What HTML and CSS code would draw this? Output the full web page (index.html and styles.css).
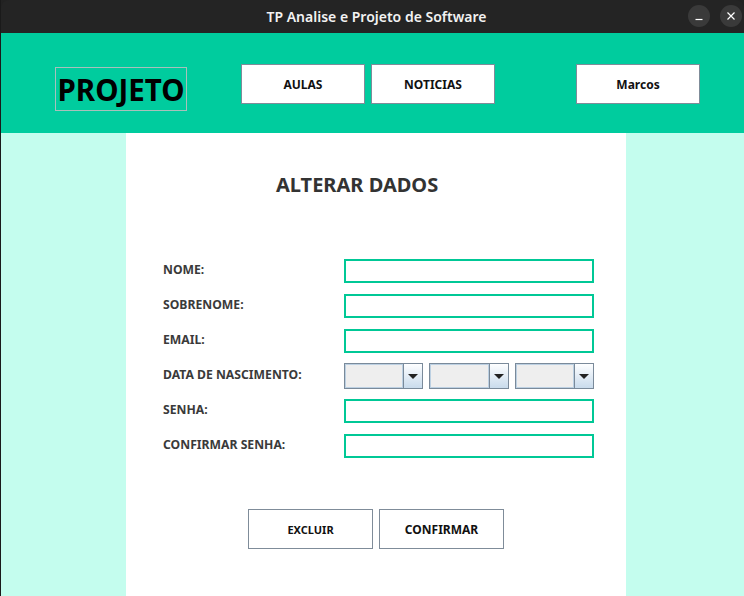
FILE: index.html
```html
<!DOCTYPE html>
<html>
<head>
<meta charset="utf-8">
<link rel="stylesheet" href="styles.css">
</head>
<body>
<div class="window">
  <div class="titlebar">
    <span class="title">TP Analise e Projeto de Software</span>
    <div class="wbtns">
      <span class="wbtn"><svg width="22" height="22" viewBox="0 0 22 22"><path d="M7.5 14.5h7" stroke="#fff" stroke-width="1.2"/></svg></span>
      <span class="wbtn"><svg width="22" height="22" viewBox="0 0 22 22"><path d="M7.5 7.5l7 7M14.5 7.5l-7 7" stroke="#fff" stroke-width="1.2"/></svg></span>
    </div>
  </div>
  <div class="header">
    <div class="logo">PROJETO</div>
    <div class="nav">
      <button class="navbtn">AULAS</button>
      <button class="navbtn">NOTICIAS</button>
    </div>
    <button class="navbtn user">Marcos</button>
  </div>
  <div class="content">
    <div class="side left"></div>
    <div class="panel">
      <h1 class="heading">ALTERAR DADOS</h1>
      <div class="form">
        <div class="row"><label>NOME:</label><div class="field"></div></div>
        <div class="row"><label>SOBRENOME:</label><div class="field"></div></div>
        <div class="row"><label>EMAIL:</label><div class="field"></div></div>
        <div class="row"><label>DATA DE NASCIMENTO:</label>
          <div class="combos">
            <div class="combo"><div class="cval"></div><div class="carrow"><svg width="12" height="7" viewBox="0 0 12 7"><path d="M1 1h10L6 6z" fill="#222"/></svg></div></div>
            <div class="combo"><div class="cval"></div><div class="carrow"><svg width="12" height="7" viewBox="0 0 12 7"><path d="M1 1h10L6 6z" fill="#222"/></svg></div></div>
            <div class="combo"><div class="cval"></div><div class="carrow"><svg width="12" height="7" viewBox="0 0 12 7"><path d="M1 1h10L6 6z" fill="#222"/></svg></div></div>
          </div>
        </div>
        <div class="row"><label>SENHA:</label><div class="field"></div></div>
        <div class="row"><label>CONFIRMAR SENHA:</label><div class="field"></div></div>
      </div>
      <div class="actions">
        <button class="abtn">EXCLUIR</button>
        <button class="abtn confirm">CONFIRMAR</button>
      </div>
    </div>
    <div class="side right"></div>
  </div>
</div>
</body>
</html>
```
FILE: styles.css
```css
* { box-sizing: border-box; }
html, body { margin: 0; padding: 0; }
body {
  width: 744px;
  height: 596px;
  overflow: hidden;
  font-family: "Noto Sans", "Open Sans", sans-serif;
  background: #222;
}
.window {
  width: 744px;
  height: 596px;
  display: flex;
  flex-direction: column;
  border-left: 1px solid #1a1a1a;
}
.titlebar {
  height: 33px;
  background: #242424;
  display: flex;
  align-items: center;
  justify-content: center;
  position: relative;
  border-radius: 8px 8px 0 0;
}
.title {
  color: #f2f2f2;
  font-size: 14px;
  font-weight: 600;
  margin-left: 8px;
}
.wbtns {
  position: absolute;
  right: 2px;
  top: 5px;
  display: flex;
  gap: 10px;
}
.wbtn {
  width: 22px;
  height: 22px;
  border-radius: 50%;
  background: #3a3a3a;
  display: block;
}
.wbtn svg { display: block; }
.header {
  height: 100px;
  background: #00cc9e;
  display: flex;
  align-items: flex-start;
  padding-left: 54px;
}
.logo {
  margin-top: 34px;
  width: 132px;
  height: 44px;
  border: 1px solid #a9c0bb;
  font-size: 29.5px;
  font-weight: 700;
  color: #000;
  display: flex;
  align-items: center;
  justify-content: center;
}
.nav {
  display: flex;
  gap: 6px;
  margin-left: 54px;
  margin-top: 31px;
}
.navbtn {
  width: 124px;
  height: 40px;
  background: #fff;
  border: 1px solid #7f8c99;
  font-family: "Noto Sans", sans-serif;
  font-size: 12px;
  font-weight: 700;
  color: #111;
  padding: 0;
}
.user {
  margin-left: 81px;
  margin-top: 31px;
}
.content {
  flex: 1;
  display: flex;
}
.side { background: #c4fdee; }
.side.left { width: 125px; }
.side.right { width: 118px; }
.panel {
  width: 500px;
  background: #fff;
  padding-top: 39px;
}
.heading {
  margin: 0;
  padding-left: 150px;
  font-size: 20px;
  line-height: 26px;
  font-weight: 700;
  color: #333;
}
.form {
  margin-top: 61px;
  padding-left: 37px;
  display: flex;
  flex-direction: column;
  gap: 11px;
}
.row {
  display: flex;
  align-items: center;
  height: 24px;
}
.row label {
  width: 181px;
  font-size: 12.2px;
  font-weight: 700;
  color: #3a3a3a;
  margin-bottom: 4px;
}
.field {
  width: 250px;
  height: 24px;
  border: 2px solid #00c896;
  background: #fff;
}
.combos {
  width: 250px;
  display: flex;
  gap: 6px;
  height: 26px;
}
.combo {
  flex: 1;
  display: flex;
  border: 1px solid #7a8a9a;
}
.cval {
  flex: 1;
  background: #eeeeee;
  border: 1px solid #bcd0e2;
}
.carrow {
  width: 19px;
  border-left: 1px solid #7a8a9a;
  background: linear-gradient(#fdfeff, #c9dbec);
  display: flex;
  align-items: center;
  justify-content: center;
}
.carrow svg { display: block; }
.actions {
  margin-top: 51px;
  padding-left: 122px;
  display: flex;
  gap: 6px;
}
.abtn {
  width: 125px;
  height: 40px;
  background: #fff;
  border: 1px solid #7f8c99;
  font-family: "Noto Sans", sans-serif;
  font-size: 11px;
  font-weight: 700;
  color: #111;
  padding: 0;
}
.abtn.confirm { font-size: 12px; }
```
